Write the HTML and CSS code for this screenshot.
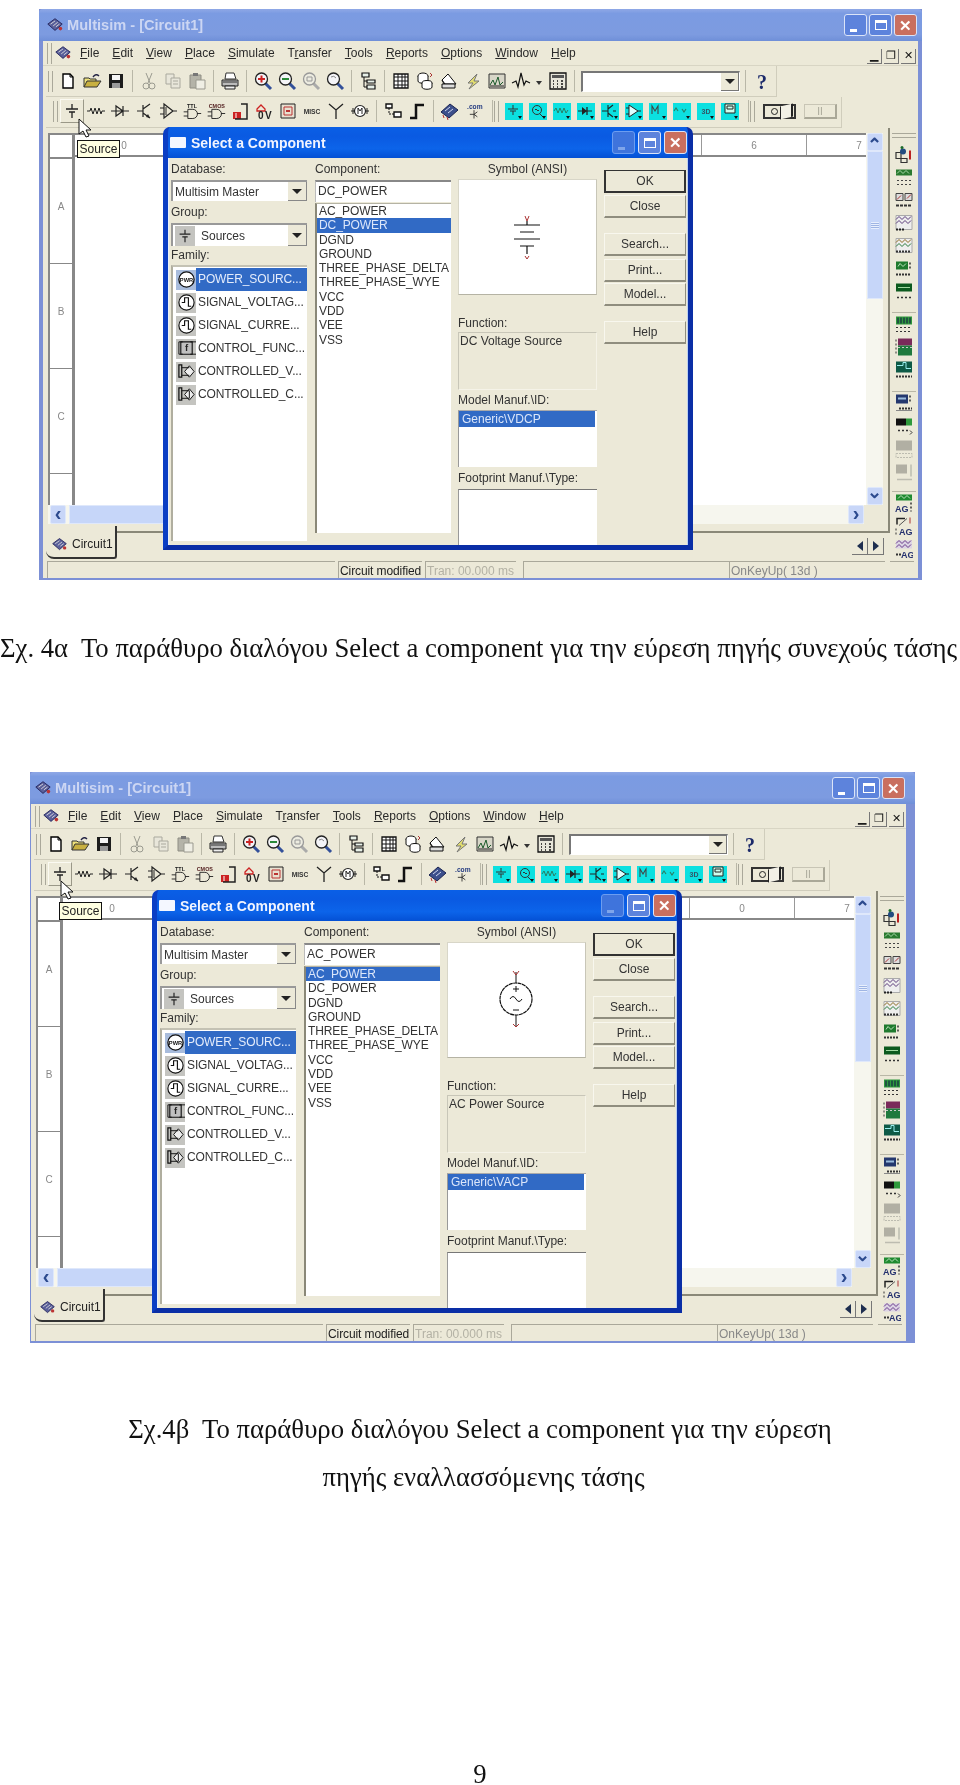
FILE: index.html
```html
<!DOCTYPE html>
<html lang="el">
<head>
<meta charset="utf-8">
<title>Select a Component</title>
<link rel="stylesheet" href="styles.css">
</head>
<body>
<svg class="defs" xmlns="http://www.w3.org/2000/svg">
<symbol id="i-app" viewBox="0 0 20 20"><path d="M2 9l8-6 8 6-8 7z" fill="#5a5f9a" stroke="#23245a"/><path d="M5 9l5-3.5M8 11l5-4M11 12l4-3" stroke="#ddd" fill="none"/><circle cx="16" cy="14" r="2" fill="#b33"/></symbol>
<symbol id="i-new" viewBox="0 0 20 20"><path d="M5 3h7l3 3v11H5z" fill="#fff" stroke="#000" stroke-width="1.4"/><path d="M12 3v3h3" fill="none" stroke="#000"/></symbol>
<symbol id="i-open" viewBox="0 0 20 20"><path d="M2 16V7h5l1 1h6v2" fill="#efe27c" stroke="#333"/><path d="M2 16l3-6h14l-4 6z" fill="#c8b040" stroke="#333"/><path d="M11 6q3-4 6-1" stroke="#224" stroke-width="1.4" fill="none"/></symbol>
<symbol id="i-save" viewBox="0 0 20 20"><path d="M3 3h14v14H3z" fill="#1d1d1d"/><path d="M6 4h8v5H6z" fill="#f4f4f4"/><path d="M6 12h8v5H6z" fill="#9a9a9a"/></symbol>
<symbol id="i-cut" viewBox="0 0 20 20"><g fill="none" stroke="#9b9b90"><path d="M7 2l4 10M13 2L9 12"/><circle cx="7" cy="15" r="3"/><circle cx="13" cy="15" r="3"/></g></symbol>
<symbol id="i-copy" viewBox="0 0 20 20"><g fill="#e8e6da" stroke="#aaa99e"><path d="M3 3h8v10H3z"/><path d="M8 7h9v10H8z"/></g><path d="M10 10h5M10 13h5" stroke="#aaa99e"/></symbol>
<symbol id="i-paste" viewBox="0 0 20 20"><path d="M3 4h11v13H3z" fill="#b4b3a8" stroke="#8f8e84"/><path d="M6 2h5v3H6z" fill="#777"/><path d="M9 9h9v9H9z" fill="#efeee4" stroke="#9a998f"/></symbol>
<symbol id="i-print" viewBox="0 0 20 20"><path d="M6 2h8l2 6H5z" fill="#fff" stroke="#333"/><path d="M2 9h16v6H2z" fill="#bbb" stroke="#222"/><path d="M5 15h10v3H5z" fill="#eee" stroke="#222"/><path d="M3 11h14" stroke="#333"/></symbol>
<symbol id="i-zin" viewBox="0 0 20 20"><path d="M12 12l6 6" stroke="#33509a" stroke-width="3"/><circle cx="8.500" cy="8" r="6" fill="#f4f4f8" stroke="#222" stroke-width="1.300"/><path d="M5 8h7M8.500 4.500v7" stroke="#c22" stroke-width="2"/></symbol>
<symbol id="i-zout" viewBox="0 0 20 20"><path d="M12 12l6 6" stroke="#33509a" stroke-width="3"/><circle cx="8.500" cy="8" r="6" fill="#f4f4f8" stroke="#222" stroke-width="1.300"/><path d="M5 8h7" stroke="#2a8a3a" stroke-width="2"/></symbol>
<symbol id="i-zar" viewBox="0 0 20 20"><path d="M12 12l6 6" stroke="#aaa" stroke-width="3"/><circle cx="8.500" cy="8" r="6" fill="#ecebe0" stroke="#999" stroke-width="1.300"/><path d="M6 6h5v4H6z" fill="none" stroke="#999"/></symbol>
<symbol id="i-zfit" viewBox="0 0 20 20"><path d="M12 12l6 6" stroke="#33509a" stroke-width="3"/><circle cx="8.500" cy="8" r="6" fill="#f4f4f8" stroke="#222" stroke-width="1.300"/><path d="M6 6q3-2 5 1" fill="none" stroke="#888"/></symbol>
<symbol id="i-tree" viewBox="0 0 20 20"><path d="M4 2h7v4H4zM9 9h8v3H9zM9 14h8v4H9z" fill="#e8f0e8" stroke="#111" stroke-width="1.200"/><path d="M6 6v10h3M6 10h3" fill="none" stroke="#111"/></symbol>
<symbol id="i-grid" viewBox="0 0 20 20"><path d="M3 3h14v14H3z" fill="#fff" stroke="#111" stroke-width="1.300"/><path d="M3 6h14M3 10h14M3 14h14M7 3v14M11 3v14M14 3v14" stroke="#111"/></symbol>
<symbol id="i-db" viewBox="0 0 20 20"><g fill="#fff" stroke="#111"><ellipse cx="8" cy="5" rx="5" ry="3"/><path d="M3 5v5c0 3 10 3 10 0V5"/><ellipse cx="12" cy="12" rx="5" ry="2.500"/><path d="M7 12v4c0 3 10 3 10 0v-4"/></g><path d="M15 2l2 2-2 2" fill="none" stroke="#a33"/></symbol>
<symbol id="i-post" viewBox="0 0 20 20"><path d="M3 9l6-6 8 10H5z" fill="#fff" stroke="#111"/><path d="M3 13h13v4H3zM3 9l3 4" fill="#ddd" stroke="#111"/></symbol>
<symbol id="i-bolt" viewBox="0 0 20 20"><path d="M14 3L5 12h5l-4 6 10-8h-5z" fill="#e3de70" stroke="#777"/></symbol>
<symbol id="i-grapher" viewBox="0 0 20 20"><path d="M2 3h16v14H2z" fill="#d8d6c8" stroke="#333"/><path d="M3 14l3-5 2 5 3-8 2 8 3-3" fill="none" stroke="#1a5a2a"/><path d="M3 15h14" stroke="#222"/></symbol>
<symbol id="i-wave" viewBox="0 0 20 20"><path d="M1 12l4-2 2 6 3-14 3 12 2-4 4 2" fill="none" stroke="#111" stroke-width="1.200"/></symbol>
<symbol id="i-calc" viewBox="0 0 20 20"><path d="M2 2h16v16H2z" fill="#e8e6da" stroke="#111" stroke-width="1.300"/><path d="M4 4h12v3H4z" fill="#555"/><path d="M5 10h1M9 10h1M13 10h2M5 13h1M9 13h1M13 13h2M5 16h1M9 16h1M13 16h2" stroke="#111" stroke-width="1.600"/></symbol>
<symbol id="i-help" viewBox="0 0 20 20"><text x="10" y="18" class="svg-help" text-anchor="middle">?</text></symbol>
<symbol id="i-src" viewBox="0 0 20 20"><path d="M10 3v5M4 8h12M7 11h6M10 11v6" stroke="#222" stroke-width="1.300" fill="none"/></symbol>
<symbol id="i-res" viewBox="0 0 20 20"><path d="M1 10h3l1-3 2 6 2-6 2 6 2-6 2 6 1-3h3" fill="none" stroke="#222"/></symbol>
<symbol id="i-dio" viewBox="0 0 20 20"><path d="M1 10h18M6 5v10l7-5zM13 5v10" fill="none" stroke="#222" stroke-width="1.200"/></symbol>
<symbol id="i-tra" viewBox="0 0 20 20"><path d="M3 10h6M9 4v12M9 8l7-5M9 12l7 5" fill="none" stroke="#222" stroke-width="1.200"/><path d="M14 13l2 4-4-1z" fill="#222"/></symbol>
<symbol id="i-amp" viewBox="0 0 20 20"><path d="M6 3v14l9-7zM2 7h4M2 13h4M15 10h4" fill="none" stroke="#222" stroke-width="1.200"/><path d="M8 6v8" stroke="#222"/></symbol>
<symbol id="i-ttl" viewBox="0 0 24 20"><text x="12" y="7" class="svg-tiny" text-anchor="middle">TTL</text><path d="M7 8h6a5 5 0 0 1 0 11H7zM2 11h5M2 16h5M18 13h5" fill="none" stroke="#222" stroke-width="1.100"/></symbol>
<symbol id="i-cmos" viewBox="0 0 24 20"><text x="13" y="7" class="svg-tiny svg-navy" text-anchor="middle">CMOS</text><path d="M7 8h6a5 5 0 0 1 0 11H7zM2 11h5M2 16h5M18 13h5" fill="none" stroke="#222" stroke-width="1.100"/></symbol>
<symbol id="i-mix" viewBox="0 0 20 20"><path d="M3 11h8v7H3z" fill="#c22"/><path d="M11 3h6v15H5" fill="none" stroke="#222" stroke-width="1.500"/><path d="M6 12v5" stroke="#fff"/></symbol>
<symbol id="i-ind" viewBox="0 0 20 20"><path d="M3 8l4-4 4 4v2H3z" fill="none" stroke="#c22" stroke-width="1.300"/><text x="4" y="18" class="svg-bold8">0</text><text x="11" y="18" class="svg-bold8">V</text></symbol>
<symbol id="i-pwr" viewBox="0 0 20 20"><path d="M3 3h14v14H3z" fill="#e8e0d0" stroke="#222"/><path d="M6 6h8v8H6z" fill="none" stroke="#b33"/><path d="M8 10h4" stroke="#b33" stroke-width="2"/></symbol>
<symbol id="i-misc" viewBox="0 0 24 20"><text x="12" y="14" class="svg-misc" text-anchor="middle">MISC</text></symbol>
<symbol id="i-ant" viewBox="0 0 20 20"><path d="M10 9v9M3 3l7 6 7-6" fill="none" stroke="#222" stroke-width="1.300"/></symbol>
<symbol id="i-mot" viewBox="0 0 20 20"><circle cx="10" cy="10" r="5.500" fill="#fff" stroke="#222" stroke-width="1.200"/><path d="M1 10h3M16 10h3M8 13V7l2 3 2-3v6" fill="none" stroke="#222"/><path d="M3 7v6M17 7v6" stroke="#222"/></symbol>
<symbol id="i-rou" viewBox="0 0 20 20"><path d="M3 3h6v4H3zM11 11h7v5h-7z" fill="#fff" stroke="#111" stroke-width="1.400"/><path d="M6 7v6h5" fill="none" stroke="#111" stroke-dasharray="2 1"/></symbol>
<symbol id="i-bus" viewBox="0 0 20 20"><path d="M3 17h6V4h8" fill="none" stroke="#111" stroke-width="2.500"/></symbol>
<symbol id="i-chip" viewBox="0 0 20 20"><path d="M1 11l9-8 8 6-9 8z" fill="#3c4f8c" stroke="#1a2350"/><path d="M5 10l5-4M8 12l5-4" stroke="#cfd6ee"/><path d="M3 14l1 3M7 16l1 3" stroke="#b33"/></symbol>
<symbol id="i-com" viewBox="0 0 24 20"><text x="13" y="8" class="svg-tiny svg-navy2" text-anchor="middle">.com</text><path d="M12 9v10M7 14h5M12 14l4-3M12 14l4 3" fill="none" stroke="#222"/></symbol>
<symbol id="c-src" viewBox="0 0 18 16"><path d="M8 2v4M3 6h10M5 8h6M8 8v4" stroke="#333" fill="none"/></symbol>
<symbol id="c-ac" viewBox="0 0 18 16"><circle cx="8" cy="7" r="4.500" fill="none" stroke="#333"/><path d="M6 7q1-2 2 0t2 0M11 11l3 3" fill="none" stroke="#333"/></symbol>
<symbol id="c-res" viewBox="0 0 18 16"><path d="M1 8l2-3 2 5 2-5 2 5 2-5 2 5 2-3" fill="none" stroke="#2b7d62"/></symbol>
<symbol id="c-dio" viewBox="0 0 18 16"><path d="M1 8h14" stroke="#222"/><path d="M5 4v8l5-4z" fill="#222"/><path d="M10 4v8" stroke="#222" stroke-width="1.300"/></symbol>
<symbol id="c-tra" viewBox="0 0 18 16"><path d="M1 8h6M7 2v12M7 6l5-4M7 10l5 4M12 8h3" fill="none" stroke="#222" stroke-width="1.100"/></symbol>
<symbol id="c-amp" viewBox="0 0 18 16"><path d="M4 2v12l9-6zM1 5h3M1 11h3M13 8h3" fill="#dff" stroke="#222"/></symbol>
<symbol id="c-m" viewBox="0 0 18 16"><path d="M3 11V3l3 5 3-5v8" fill="none" stroke="#444" stroke-width="1.100"/></symbol>
<symbol id="c-anl" viewBox="0 0 18 16"><path d="M1 8l2-3 2 3M9 6l2 3 2-3" fill="none" stroke="#2b7d62" stroke-width="1.100"/></symbol>
<symbol id="c-3d" viewBox="0 0 18 16"><text x="9" y="11" class="svg-3d" text-anchor="middle">3D</text></symbol>
<symbol id="c-box" viewBox="0 0 18 16"><path d="M4 1h10v9H4z" fill="#cfe" stroke="#222"/><path d="M6 3h6v3H6z" fill="none" stroke="#222"/></symbol>
<symbol id="s1" viewBox="0 0 18 20"><path d="M1 8h5v6H1zM6 14h6v4H6z" fill="none" stroke="#333" stroke-width="1.200"/><circle cx="8" cy="7" r="3" fill="#234c80"/><path d="M15 6v9" stroke="#b22" stroke-width="2"/><circle cx="7" cy="3" r="1.500" fill="#1a6a2a"/></symbol>
<symbol id="s2" viewBox="0 0 18 20"><path d="M1 2h16v6H1z" fill="#2a7a30"/><path d="M2 6l3-3 3 3 3-3 3 3" stroke="#a8d8a8" fill="none"/><path d="M2 13h14M2 17h14" stroke="#444" stroke-dasharray="2 2"/></symbol>
<symbol id="s3" viewBox="0 0 18 20"><path d="M1 3h7v7H1zM10 3h7v7h-7z" fill="#ddd" stroke="#444"/><path d="M2 9l4-4M12 8l4-4" stroke="#a33"/><path d="M1 15h16" stroke="#333" stroke-dasharray="3 1" stroke-width="2"/></symbol>
<symbol id="s4" viewBox="0 0 18 20"><path d="M1 2h16v14H1z" fill="#eee" stroke="#aaa"/><path d="M1 6l3-3 3 3 3-3 3 3 3-3M1 10l3-3 3 3 3-3 3 3 3-3" stroke="#5a3a7a" fill="none"/><path d="M1 16h9" stroke="#222" stroke-width="2" stroke-dasharray="2 1"/></symbol>
<symbol id="s5" viewBox="0 0 18 20"><path d="M1 2h16v14H1z" fill="#eee" stroke="#aaa"/><path d="M1 6l3-3 3 3 3-3 3 3 3-3" stroke="#8a6a20" fill="none"/><path d="M1 10l3-3 3 3 3-3 3 3 3-3" stroke="#267a3a" fill="none"/><path d="M1 15h15" stroke="#333" stroke-dasharray="2 1" stroke-width="2"/></symbol>
<symbol id="s6" viewBox="0 0 18 20"><path d="M1 2h12v8H1z" fill="#1f7a2e"/><path d="M3 7l2-3 3 3 3-3" stroke="#bde2bd" fill="none"/><path d="M15 3v2M15 7v2" stroke="#333" stroke-width="1.500"/><path d="M1 15h15" stroke="#333" stroke-dasharray="2 1" stroke-width="2"/></symbol>
<symbol id="s7" viewBox="0 0 18 20"><path d="M1 1h16v8H1z" fill="#0c5a1e"/><path d="M3 5h12" stroke="#9fd89f"/><path d="M2 15h14" stroke="#333" stroke-dasharray="2 2" stroke-width="1.500"/></symbol>
<symbol id="s8" viewBox="0 0 18 20"><path d="M1 2h16v8H1z" fill="#2f9a3c"/><path d="M3 3v6M6 3v6M9 3v6M12 3v6M15 3v6" stroke="#114" /><path d="M1 13h16M1 17h16" stroke="#333" stroke-dasharray="2 2"/></symbol>
<symbol id="s9" viewBox="0 0 18 20"><path d="M3 1h14v7H3z" fill="#7a2a5a"/><path d="M3 8h14v10H3z" fill="#1f7a3e"/><path d="M3 10h14" stroke="#ccc" stroke-dasharray="2 2"/><path d="M1 2v16" stroke="#333" stroke-dasharray="2 2"/></symbol>
<symbol id="s10" viewBox="0 0 18 20"><path d="M1 1h16v11H1z" fill="#0d5a46"/><path d="M2 5h6v-3h3v6h5" stroke="#9ee" fill="none"/><path d="M1 16h16" stroke="#333" stroke-dasharray="2 1" stroke-width="2"/></symbol>
<symbol id="s11" viewBox="0 0 18 20"><path d="M1 1h12v9H1z" fill="#24386e"/><path d="M3 5h8" stroke="#9bd" stroke-width="2"/><path d="M15 2v2M15 6v2" stroke="#333" stroke-width="1.500"/><path d="M4 15h13" stroke="#333" stroke-dasharray="2 1" stroke-width="2"/><path d="M1 17h16" stroke="#888"/></symbol>
<symbol id="s12" viewBox="0 0 18 20"><path d="M1 2h10v7H1z" fill="#111"/><path d="M11 2h6v7h-6z" fill="#2f9a3c"/><path d="M3 14h10" stroke="#333" stroke-dasharray="2 2" stroke-width="1.500"/><path d="M15 14l2 2-2 2" stroke="#333" fill="none"/></symbol>
<symbol id="s13" viewBox="0 0 18 20"><path d="M1 1h16v10H1z" fill="#b1afa3"/><path d="M1 14h16v4H1z" fill="none" stroke="#bdbcb0" stroke-dasharray="2 1"/></symbol>
<symbol id="s14" viewBox="0 0 18 20"><path d="M1 2h11v9H1z" fill="#b1afa3"/><path d="M16 2v12M2 17h15" stroke="#bdbcb0" stroke-width="1.500"/></symbol>
<symbol id="s15" viewBox="0 0 18 20"><path d="M1 1h16v6H1z" fill="#1f8a30"/><path d="M3 5l3-3 3 3 3-3 3 3" stroke="#bde2bd" fill="none"/><text x="0" y="18" class="svg-ag">AG</text><path d="M16 9v9" stroke="#333" stroke-dasharray="2 2" stroke-width="1.500"/></symbol>
<symbol id="s16" viewBox="0 0 18 20"><path d="M2 8V2h8" fill="none" stroke="#222" stroke-width="1.500"/><path d="M4 9l8-7" stroke="#555"/><path d="M15 1v6" stroke="#a33"/><text x="4" y="18" class="svg-ag">AG</text><path d="M1 12v6" stroke="#333" stroke-dasharray="2 2"/></symbol>
<symbol id="s17" viewBox="0 0 18 20"><path d="M1 1h16v8H1z" fill="#dcd4e4"/><path d="M1 4l3-3 3 3 3-3 3 3 3-3M1 8l3-3 3 3 3-3 3 3 3-3" stroke="#6a3a8a" fill="none"/><text x="6" y="18" class="svg-ag">AG</text><path d="M1 15h5" stroke="#333" stroke-width="2" stroke-dasharray="2 1"/></symbol>
<symbol id="f-pwr" viewBox="0 0 20 20"><circle cx="10" cy="10" r="8" fill="#fff" stroke="#111" stroke-width="1.400"/><text x="10" y="12.500" class="svg-pwr" text-anchor="middle">PWR</text></symbol>
<symbol id="f-sig" viewBox="0 0 20 20"><circle cx="10" cy="10" r="8" fill="#fff" stroke="#111" stroke-width="1.200"/><path d="M5 10h3V5h4v9h3" fill="none" stroke="#111" stroke-width="1.200"/></symbol>
<symbol id="f-fun" viewBox="0 0 20 20"><path d="M4 3h12v13H4z" fill="#c0c0c0" stroke="#111" stroke-width="1.200"/><path d="M2 3h4M2 16h4M14 3h6M14 16h6M2 3v13" stroke="#111" fill="none"/><text x="10" y="13" class="svg-bold8" text-anchor="middle">f</text></symbol>
<symbol id="f-ctl" viewBox="0 0 20 20"><path d="M2 3h3v13H2z" fill="none" stroke="#111" stroke-width="1.300"/><path d="M13 4l5 6-5 6-5-6z" fill="#eee" stroke="#111"/><path d="M5 6h8M5 14h8" stroke="#111"/></symbol>
<symbol id="f-cti" viewBox="0 0 20 20"><path d="M2 3h3v13H2z" fill="none" stroke="#111" stroke-width="1.300"/><path d="M13 4l5 6-5 6-5-6z" fill="#eee" stroke="#111"/><path d="M5 6h8M5 14h8M13 6v8" stroke="#111"/></symbol>
<symbol id="sym-dc" viewBox="0 0 40 60"><g fill="none" stroke="#111" stroke-width="1.200"><path d="M20 13v4M7 17h26M13 24h14M7 31h26M13 38h14M20 38v8"/></g><path d="M18 8l2 5 2-5M18 48l2 3 2-3" fill="none" stroke="#a33"/></symbol>
<symbol id="sym-ac" viewBox="0 0 40 60"><path d="M20 3v11M20 46v11" stroke="#111" fill="none"/><circle cx="20" cy="30" r="16" fill="#fff" stroke="#111" stroke-width="1.200" stroke-dasharray="4 .5"/><path d="M14 30q3-5 6 0t6 0M20 17v6M17 20h6M17 41h6" fill="none" stroke="#111"/><path d="M17 2l3 4 3-4M17 55l3 3 3-3" fill="none" stroke="#a33"/></symbol>
</svg>

<section class="win win-a">
  <header class="titlebar"><svg class="app-ic"><use href="#i-app"/></svg><span class="title-text">Multisim - [Circuit1]</span>
    <div class="caps"><span class="cap cap-min"><i class="glyph-min"></i></span><span class="cap cap-max"><i class="glyph-max"></i></span><span class="cap cap-close">✕</span></div></header>
  <div class="win-body">
    <nav class="menubar"><i class="grip"></i><svg class="menu-ic"><use href="#i-app"/></svg>
      <span class="m"><u>F</u>ile</span><span class="m"><u>E</u>dit</span><span class="m"><u>V</u>iew</span><span class="m"><u>P</u>lace</span><span class="m"><u>S</u>imulate</span><span class="m">T<u>r</u>ansfer</span><span class="m"><u>T</u>ools</span><span class="m"><u>R</u>eports</span><span class="m"><u>O</u>ptions</span><span class="m"><u>W</u>indow</span><span class="m"><u>H</u>elp</span>
      <div class="mdi"><span class="mdi-b">▁</span><span class="mdi-b">❐</span><span class="mdi-b">✕</span></div></nav>
    <div class="toolbar tb-1"><i class="grip"></i>
      <b class="t"><svg><use href="#i-new"/></svg></b><b class="t"><svg><use href="#i-open"/></svg></b><b class="t"><svg><use href="#i-save"/></svg></b><i class="sep"></i>
      <b class="t"><svg><use href="#i-cut"/></svg></b><b class="t"><svg><use href="#i-copy"/></svg></b><b class="t"><svg><use href="#i-paste"/></svg></b><i class="sep"></i>
      <b class="t"><svg><use href="#i-print"/></svg></b><i class="sep"></i>
      <b class="t"><svg><use href="#i-zin"/></svg></b><b class="t"><svg><use href="#i-zout"/></svg></b><b class="t"><svg><use href="#i-zar"/></svg></b><b class="t"><svg><use href="#i-zfit"/></svg></b><i class="sep"></i>
      <b class="t"><svg><use href="#i-tree"/></svg></b><i class="sep"></i>
      <b class="t"><svg><use href="#i-grid"/></svg></b><b class="t"><svg><use href="#i-db"/></svg></b><b class="t"><svg><use href="#i-post"/></svg></b><b class="t"><svg><use href="#i-bolt"/></svg></b><b class="t"><svg><use href="#i-grapher"/></svg></b><b class="t"><svg><use href="#i-wave"/></svg></b><i class="caret-cell"></i><b class="t"><svg><use href="#i-calc"/></svg></b><i class="sep"></i>
      <div class="tb-combo"><span class="tb-combo-btn"><i class="tri"></i></span></div><i class="sep"></i>
      <b class="t"><svg><use href="#i-help"/></svg></b></div>
    <div class="toolbar tb-2"><i class="grip"></i>
      <b class="t t-press"><svg><use href="#i-src"/></svg></b><b class="t"><svg><use href="#i-res"/></svg></b><b class="t"><svg><use href="#i-dio"/></svg></b><b class="t"><svg><use href="#i-tra"/></svg></b><b class="t"><svg><use href="#i-amp"/></svg></b><b class="t"><svg><use href="#i-ttl"/></svg></b><b class="t"><svg><use href="#i-cmos"/></svg></b><b class="t"><svg><use href="#i-mix"/></svg></b><b class="t"><svg><use href="#i-ind"/></svg></b><b class="t"><svg><use href="#i-pwr"/></svg></b><b class="t"><svg><use href="#i-misc"/></svg></b><b class="t"><svg><use href="#i-ant"/></svg></b><b class="t"><svg><use href="#i-mot"/></svg></b><i class="sep"></i>
      <b class="t"><svg><use href="#i-rou"/></svg></b><b class="t"><svg><use href="#i-bus"/></svg></b><i class="sep"></i>
      <b class="t"><svg><use href="#i-chip"/></svg></b><b class="t"><svg><use href="#i-com"/></svg></b><i class="sep-s"></i><i class="grip grip-2"></i>
      <b class="cy"><svg><use href="#c-src"/></svg></b><b class="cy"><svg><use href="#c-ac"/></svg></b><b class="cy"><svg><use href="#c-res"/></svg></b><b class="cy"><svg><use href="#c-dio"/></svg></b><b class="cy"><svg><use href="#c-tra"/></svg></b><b class="cy"><svg><use href="#c-amp"/></svg></b><b class="cy"><svg><use href="#c-m"/></svg></b><b class="cy"><svg><use href="#c-anl"/></svg></b><b class="cy"><svg><use href="#c-3d"/></svg></b><b class="cy"><svg><use href="#c-box"/></svg></b><i class="sep-s"></i><i class="grip grip-2"></i>
      <span class="sim-sw"><i class="sw-dot"></i><i class="sw-flag"></i></span><span class="sim-pause">II</span></div>
    <div class="mid">
      <div class="mid-main">
        <div class="client">
          <div class="client-top">
            <div class="rows"><span class="r-corner"></span><span class="r-cell">A</span><span class="r-cell">B</span><span class="r-cell">C</span></div>
            <div class="sheet"><div class="ruler"><span>0</span><span></span><span></span><span></span><span></span><span></span><span>6</span><span>7</span></div></div>
            <div class="vscroll"><span class="sb-btn">⌃</span><span class="vthumb"><i></i></span><span class="vtrack"></span><span class="sb-btn sb-down">⌄</span></div>
          </div>
          <div class="hscroll"><span class="sb-btn sb-h">‹</span><span class="hthumb"></span><span class="htrack"></span><span class="sb-btn sb-h">›</span></div>
        </div>
        <div class="tabrow"><span class="tab"><svg class="tab-ic"><use href="#i-app"/></svg>Circuit1</span><div class="navs"><span class="nav"><i class="tri-l"></i></span><span class="nav"><i class="tri-r"></i></span></div></div>
      </div>
      <aside class="side">
        <i class="side-grip"></i>
        <svg class="s"><use href="#s1"/></svg><svg class="s"><use href="#s2"/></svg><svg class="s"><use href="#s3"/></svg><svg class="s"><use href="#s4"/></svg><svg class="s"><use href="#s5"/></svg><svg class="s"><use href="#s6"/></svg><svg class="s"><use href="#s7"/></svg><i class="side-sep"></i>
        <svg class="s"><use href="#s8"/></svg><svg class="s"><use href="#s9"/></svg><svg class="s"><use href="#s10"/></svg><i class="side-sep side-sep-l"></i>
        <svg class="s"><use href="#s11"/></svg><svg class="s"><use href="#s12"/></svg><svg class="s"><use href="#s13"/></svg><svg class="s"><use href="#s14"/></svg><i class="side-sep side-sep-m"></i>
        <svg class="s"><use href="#s15"/></svg><svg class="s"><use href="#s16"/></svg><svg class="s"><use href="#s17"/></svg>
      </aside>
    </div>
    <footer class="status"><span class="st st-1"></span><span class="st st-2">Circuit modified</span><span class="st st-3">Tran: 00.000 ms</span><span class="st st-4"></span><span class="st st-5">OnKeyUp( 13d )</span><span class="st st-6"></span></footer>
  </div>
  <svg class="cursor" viewBox="0 0 14 20"><path d="M1 1v15l4-3 3 6 3-1-3-6h5z" fill="#fff" stroke="#111"/></svg>
  <span class="tip">Source</span>
  <div class="dlg">
    <header class="dlg-title"><i class="dlg-ic"></i><span class="dlg-text">Select a Component</span>
      <div class="caps dlg-caps"><span class="cap cap-min cap-dim"><i class="glyph-min"></i></span><span class="cap cap-max"><i class="glyph-max"></i></span><span class="cap cap-close">✕</span></div></header>
    <div class="dlg-body">
      <div class="col">
        <label class="lb">Database:</label>
        <div class="combo c1"><span>Multisim Master</span><span class="combo-btn"><i class="tri"></i></span></div>
        <label class="lb lb-g">Group:</label>
        <div class="combo c2"><span class="grp-ic"><svg><use href="#i-src"/></svg></span><span>Sources</span><span class="combo-btn"><i class="tri"></i></span></div>
        <label class="lb lb-f">Family:</label>
        <ul class="fam">
          <li class="sel"><span class="fi fi-sel"><svg><use href="#f-pwr"/></svg></span><span class="ft">POWER_SOURC...</span></li>
          <li><span class="fi"><svg><use href="#f-sig"/></svg></span><span class="ft">SIGNAL_VOLTAG...</span></li>
          <li><span class="fi"><svg><use href="#f-sig"/></svg></span><span class="ft">SIGNAL_CURRE...</span></li>
          <li><span class="fi"><svg><use href="#f-fun"/></svg></span><span class="ft">CONTROL_FUNC...</span></li>
          <li><span class="fi"><svg><use href="#f-ctl"/></svg></span><span class="ft">CONTROLLED_V...</span></li>
          <li><span class="fi"><svg><use href="#f-cti"/></svg></span><span class="ft">CONTROLLED_C...</span></li>
        </ul>
      </div>
      <div class="col">
        <label class="lb">Component:</label>
        <div class="inp">DC_POWER</div>
        <ul class="comp">
          <li>AC_POWER</li><li class="sel">DC_POWER</li><li>DGND</li><li>GROUND</li><li>THREE_PHASE_DELTA</li><li>THREE_PHASE_WYE</li><li>VCC</li><li>VDD</li><li>VEE</li><li>VSS</li>
        </ul>
      </div>
      <div class="col">
        <label class="lb lb-c">Symbol (ANSI)</label>
        <div class="sym"><svg class="sym-dc"><use href="#sym-dc"/></svg></div>
        <label class="lb lb-fn">Function:</label>
        <div class="fn">DC Voltage Source</div>
        <label class="lb lb-m">Model Manuf.\ID:</label>
        <div class="mdl"><span class="mdl-sel">Generic\VDCP</span></div>
        <label class="lb lb-fp">Footprint Manuf.\Type:</label>
        <div class="fp"></div>
      </div>
      <div class="col btns">
        <button class="btn btn-def">OK</button><button class="btn btn-2">Close</button><button class="btn btn-3">Search...</button><button class="btn btn-4">Print...</button><button class="btn btn-5">Model...</button><button class="btn btn-3">Help</button>
      </div>
    </div>
  </div>
</section>

<p class="cap1">Σχ. 4α&nbsp; Το παράθυρο διαλόγου Select a component για την εύρεση πηγής συνεχούς τάσης</p>

<section class="win win-b">
  <header class="titlebar"><svg class="app-ic"><use href="#i-app"/></svg><span class="title-text">Multisim - [Circuit1]</span>
    <div class="caps"><span class="cap cap-min"><i class="glyph-min"></i></span><span class="cap cap-max"><i class="glyph-max"></i></span><span class="cap cap-close">✕</span></div></header>
  <div class="win-body">
    <nav class="menubar"><i class="grip"></i><svg class="menu-ic"><use href="#i-app"/></svg>
      <span class="m"><u>F</u>ile</span><span class="m"><u>E</u>dit</span><span class="m"><u>V</u>iew</span><span class="m"><u>P</u>lace</span><span class="m"><u>S</u>imulate</span><span class="m">T<u>r</u>ansfer</span><span class="m"><u>T</u>ools</span><span class="m"><u>R</u>eports</span><span class="m"><u>O</u>ptions</span><span class="m"><u>W</u>indow</span><span class="m"><u>H</u>elp</span>
      <div class="mdi"><span class="mdi-b">▁</span><span class="mdi-b">❐</span><span class="mdi-b">✕</span></div></nav>
    <div class="toolbar tb-1"><i class="grip"></i>
      <b class="t"><svg><use href="#i-new"/></svg></b><b class="t"><svg><use href="#i-open"/></svg></b><b class="t"><svg><use href="#i-save"/></svg></b><i class="sep"></i>
      <b class="t"><svg><use href="#i-cut"/></svg></b><b class="t"><svg><use href="#i-copy"/></svg></b><b class="t"><svg><use href="#i-paste"/></svg></b><i class="sep"></i>
      <b class="t"><svg><use href="#i-print"/></svg></b><i class="sep"></i>
      <b class="t"><svg><use href="#i-zin"/></svg></b><b class="t"><svg><use href="#i-zout"/></svg></b><b class="t"><svg><use href="#i-zar"/></svg></b><b class="t"><svg><use href="#i-zfit"/></svg></b><i class="sep"></i>
      <b class="t"><svg><use href="#i-tree"/></svg></b><i class="sep"></i>
      <b class="t"><svg><use href="#i-grid"/></svg></b><b class="t"><svg><use href="#i-db"/></svg></b><b class="t"><svg><use href="#i-post"/></svg></b><b class="t"><svg><use href="#i-bolt"/></svg></b><b class="t"><svg><use href="#i-grapher"/></svg></b><b class="t"><svg><use href="#i-wave"/></svg></b><i class="caret-cell"></i><b class="t"><svg><use href="#i-calc"/></svg></b><i class="sep"></i>
      <div class="tb-combo"><span class="tb-combo-btn"><i class="tri"></i></span></div><i class="sep"></i>
      <b class="t"><svg><use href="#i-help"/></svg></b></div>
    <div class="toolbar tb-2"><i class="grip"></i>
      <b class="t t-press"><svg><use href="#i-src"/></svg></b><b class="t"><svg><use href="#i-res"/></svg></b><b class="t"><svg><use href="#i-dio"/></svg></b><b class="t"><svg><use href="#i-tra"/></svg></b><b class="t"><svg><use href="#i-amp"/></svg></b><b class="t"><svg><use href="#i-ttl"/></svg></b><b class="t"><svg><use href="#i-cmos"/></svg></b><b class="t"><svg><use href="#i-mix"/></svg></b><b class="t"><svg><use href="#i-ind"/></svg></b><b class="t"><svg><use href="#i-pwr"/></svg></b><b class="t"><svg><use href="#i-misc"/></svg></b><b class="t"><svg><use href="#i-ant"/></svg></b><b class="t"><svg><use href="#i-mot"/></svg></b><i class="sep"></i>
      <b class="t"><svg><use href="#i-rou"/></svg></b><b class="t"><svg><use href="#i-bus"/></svg></b><i class="sep"></i>
      <b class="t"><svg><use href="#i-chip"/></svg></b><b class="t"><svg><use href="#i-com"/></svg></b><i class="sep-s"></i><i class="grip grip-2"></i>
      <b class="cy"><svg><use href="#c-src"/></svg></b><b class="cy"><svg><use href="#c-ac"/></svg></b><b class="cy"><svg><use href="#c-res"/></svg></b><b class="cy"><svg><use href="#c-dio"/></svg></b><b class="cy"><svg><use href="#c-tra"/></svg></b><b class="cy"><svg><use href="#c-amp"/></svg></b><b class="cy"><svg><use href="#c-m"/></svg></b><b class="cy"><svg><use href="#c-anl"/></svg></b><b class="cy"><svg><use href="#c-3d"/></svg></b><b class="cy"><svg><use href="#c-box"/></svg></b><i class="sep-s"></i><i class="grip grip-2"></i>
      <span class="sim-sw"><i class="sw-dot"></i><i class="sw-flag"></i></span><span class="sim-pause">II</span></div>
    <div class="mid">
      <div class="mid-main">
        <div class="client">
          <div class="client-top">
            <div class="rows"><span class="r-corner"></span><span class="r-cell">A</span><span class="r-cell">B</span><span class="r-cell">C</span></div>
            <div class="sheet"><div class="ruler"><span>0</span><span></span><span></span><span></span><span></span><span></span><span>0</span><span>7</span></div></div>
            <div class="vscroll"><span class="sb-btn">⌃</span><span class="vthumb"><i></i></span><span class="vtrack"></span><span class="sb-btn sb-down">⌄</span></div>
          </div>
          <div class="hscroll"><span class="sb-btn sb-h">‹</span><span class="hthumb"></span><span class="htrack"></span><span class="sb-btn sb-h">›</span></div>
        </div>
        <div class="tabrow"><span class="tab"><svg class="tab-ic"><use href="#i-app"/></svg>Circuit1</span><div class="navs"><span class="nav"><i class="tri-l"></i></span><span class="nav"><i class="tri-r"></i></span></div></div>
      </div>
      <aside class="side">
        <i class="side-grip"></i>
        <svg class="s"><use href="#s1"/></svg><svg class="s"><use href="#s2"/></svg><svg class="s"><use href="#s3"/></svg><svg class="s"><use href="#s4"/></svg><svg class="s"><use href="#s5"/></svg><svg class="s"><use href="#s6"/></svg><svg class="s"><use href="#s7"/></svg><i class="side-sep"></i>
        <svg class="s"><use href="#s8"/></svg><svg class="s"><use href="#s9"/></svg><svg class="s"><use href="#s10"/></svg><i class="side-sep side-sep-l"></i>
        <svg class="s"><use href="#s11"/></svg><svg class="s"><use href="#s12"/></svg><svg class="s"><use href="#s13"/></svg><svg class="s"><use href="#s14"/></svg><i class="side-sep side-sep-m"></i>
        <svg class="s"><use href="#s15"/></svg><svg class="s"><use href="#s16"/></svg><svg class="s"><use href="#s17"/></svg>
      </aside>
    </div>
    <footer class="status"><span class="st st-1"></span><span class="st st-2">Circuit modified</span><span class="st st-3">Tran: 00.000 ms</span><span class="st st-4"></span><span class="st st-5">OnKeyUp( 13d )</span><span class="st st-6"></span></footer>
  </div>
  <svg class="cursor" viewBox="0 0 14 20"><path d="M1 1v15l4-3 3 6 3-1-3-6h5z" fill="#fff" stroke="#111"/></svg>
  <span class="tip">Source</span>
  <div class="dlg">
    <header class="dlg-title"><i class="dlg-ic"></i><span class="dlg-text">Select a Component</span>
      <div class="caps dlg-caps"><span class="cap cap-min cap-dim"><i class="glyph-min"></i></span><span class="cap cap-max"><i class="glyph-max"></i></span><span class="cap cap-close">✕</span></div></header>
    <div class="dlg-body">
      <div class="col">
        <label class="lb">Database:</label>
        <div class="combo c1"><span>Multisim Master</span><span class="combo-btn"><i class="tri"></i></span></div>
        <label class="lb lb-g">Group:</label>
        <div class="combo c2"><span class="grp-ic"><svg><use href="#i-src"/></svg></span><span>Sources</span><span class="combo-btn"><i class="tri"></i></span></div>
        <label class="lb lb-f">Family:</label>
        <ul class="fam">
          <li class="sel"><span class="fi fi-sel"><svg><use href="#f-pwr"/></svg></span><span class="ft">POWER_SOURC...</span></li>
          <li><span class="fi"><svg><use href="#f-sig"/></svg></span><span class="ft">SIGNAL_VOLTAG...</span></li>
          <li><span class="fi"><svg><use href="#f-sig"/></svg></span><span class="ft">SIGNAL_CURRE...</span></li>
          <li><span class="fi"><svg><use href="#f-fun"/></svg></span><span class="ft">CONTROL_FUNC...</span></li>
          <li><span class="fi"><svg><use href="#f-ctl"/></svg></span><span class="ft">CONTROLLED_V...</span></li>
          <li><span class="fi"><svg><use href="#f-cti"/></svg></span><span class="ft">CONTROLLED_C...</span></li>
        </ul>
      </div>
      <div class="col">
        <label class="lb">Component:</label>
        <div class="inp">AC_POWER</div>
        <ul class="comp">
          <li class="sel">AC_POWER</li><li>DC_POWER</li><li>DGND</li><li>GROUND</li><li>THREE_PHASE_DELTA</li><li>THREE_PHASE_WYE</li><li>VCC</li><li>VDD</li><li>VEE</li><li>VSS</li>
        </ul>
      </div>
      <div class="col">
        <label class="lb lb-c">Symbol (ANSI)</label>
        <div class="sym"><svg class="sym-ac"><use href="#sym-ac"/></svg></div>
        <label class="lb lb-fn">Function:</label>
        <div class="fn">AC Power Source</div>
        <label class="lb lb-m">Model Manuf.\ID:</label>
        <div class="mdl"><span class="mdl-sel">Generic\VACP</span></div>
        <label class="lb lb-fp">Footprint Manuf.\Type:</label>
        <div class="fp"></div>
      </div>
      <div class="col btns">
        <button class="btn btn-def">OK</button><button class="btn btn-2">Close</button><button class="btn btn-3">Search...</button><button class="btn btn-4">Print...</button><button class="btn btn-5">Model...</button><button class="btn btn-3">Help</button>
      </div>
    </div>
  </div>
</section>

<p class="cap2">Σχ.4β&nbsp; Το παράθυρο διαλόγου Select a component για την εύρεση<span class="cap2-l2">πηγής εναλλασσόμενης τάσης</span></p>
<p class="pageno">9</p>
</body>
</html>
```
FILE: styles.css
```css
html, body { margin: 0; padding: 0; background: #fff; }
body { width: 960px; font-family: "Liberation Serif", "Times New Roman", serif; color: #111; overflow-x: hidden; }
.defs { display: none; }
.svg-help { font: bold 20px "Liberation Serif", serif; fill: #1c2a6a; }
.svg-tiny { font: bold 6.500px "Liberation Sans", sans-serif; fill: #222; }
.svg-navy { fill: #522; }
.svg-navy2 { fill: #233a80; font-size: 8px; }
.svg-bold8 { font: bold 10px "Liberation Sans", sans-serif; fill: #222; }
.svg-misc { font: bold 8px "Liberation Sans", sans-serif; fill: #333; }
.svg-3d { font: bold 7px "Liberation Sans", sans-serif; fill: #356; }
.svg-ag { font: bold 9px "Liberation Sans", sans-serif; fill: #24306e; }
.svg-pwr { font: bold 6px "Liberation Sans", sans-serif; fill: #111; }

/* Application window */
.win { --l: 4px; --r: 4px; position: relative; display: flex; flex-direction: column; box-sizing: border-box; height: 571px; background: #7c90d6; font-family: "Liberation Sans", Arial, sans-serif; font-size: 12px; color: #222; filter: blur(.4px); }
.win-a { width: 883px; margin: 9px 0 0 39px; }
.win-b { --l: 1px; --r: 9px; width: 885px; margin: 0 0 0 30px; }
.titlebar { display: flex; align-items: center; height: 32px; flex: none; box-sizing: border-box; padding: 0 calc(var(--r) + 1px) 0 calc(var(--l) + 3px); background: linear-gradient(#8fa8e6, #7b9be2 14%, #7d9be0 80%, #6f8fd8); border-radius: 4px 4px 0 0; }
.app-ic { width: 18px; height: 18px; margin-right: 3px; }
.title-text { font-size: 14.600px; font-weight: bold; color: #ccd6f3; }
.caps { margin-left: auto; display: flex; gap: 2px; }
.cap { display: flex; align-items: center; justify-content: center; width: 23px; height: 22px; box-sizing: border-box; border: 1px solid #dbe4f8; border-radius: 3px; background: #5d83dc; color: #fff; font-size: 15px; line-height: 1; }
.cap-close { background: #c96f5f; font-weight: bold; }
.glyph-min { align-self: flex-end; width: 7px; height: 3px; margin: 0 5px 3px 0; background: #fff; }
.glyph-max { width: 12px; height: 10px; border: 1px solid #fff; border-top-width: 3px; box-sizing: border-box; }
.cap-dim { background: #3f74dc; border-color: #6c9df0; }
.cap-dim .glyph-min { background: #7fa5ea; }
.win-body { display: flex; flex-direction: column; flex: 1; margin: 0 var(--r) 2px var(--l); background: #ece9d8; min-height: 0; }

.menubar { display: flex; align-items: center; gap: 13px; height: 25px; flex: none; box-sizing: border-box; padding: 0 2px 0 4px; border-bottom: 1px solid #d8d5c4; }
.grip { flex: none; width: 3px; height: 21px; border-left: 1px solid #aaa89a; border-right: 1px solid #aaa89a; }
.menubar .grip { margin-right: -11px; }
.menu-ic { width: 18px; height: 18px; margin-right: -5px; }
.m { font-size: 12px; color: #2a2a2a; }
.mdi { margin-left: auto; display: flex; gap: 2px; margin-top: 6px; }
.mdi-b { display: flex; align-items: center; justify-content: center; width: 14px; height: 14px; border-right: 1px solid #777; border-bottom: 1px solid #777; font-size: 11px; color: #111; }

.toolbar { display: flex; align-items: center; flex: none; height: 31px; box-sizing: border-box; margin-left: 3px; padding-left: 2px; border-bottom: 1px solid #d0cdbc; border-right: 1px solid #d0cdbc; }
.tb-1 { width: 731px; }
.tb-2 { width: 796px; padding-bottom: 2px; }
.tb-2 > .grip:first-child { margin-left: 5px; margin-right: 2px; }
.tb-1 > .grip:first-child { margin-right: 3px; }
.t { display: flex; align-items: center; justify-content: center; flex: none; width: 24px; height: 24px; box-sizing: border-box; }
.t svg { width: 20px; height: 20px; }
.t-press { border: 1px solid; border-color: #fbfaf2 #9a9888 #9a9888 #fbfaf2; }
.sep { flex: none; width: 9px; height: 22px; box-sizing: border-box; border-left: 1px solid #b9b7a7; margin-left: 4px; margin-right: -4px; }
.sep-s { flex: none; width: 1px; height: 22px; background: #b9b7a7; margin-left: 6px; }
.grip-2 { margin: 0 3px 0 1px; }
.caret-cell { flex: none; width: 13px; height: 0; }
.caret-cell::after { content: ""; display: block; width: 0; height: 0; margin-left: 3px; border: 3px solid transparent; border-top: 4px solid #333; border-bottom: 0; }
.tb-combo { display: flex; justify-content: flex-end; flex: none; width: 159px; height: 21px; margin: 0 1px 0 2px; box-sizing: border-box; background: #fff; border: 1px solid #fff; border-top: 2px solid #777; border-left: 2px solid #777; }
.tb-combo-btn { display: flex; align-items: center; justify-content: center; width: 17px; background: #ece9d8; border-right: 1px solid #777; border-bottom: 1px solid #777; }
.tri { width: 0; height: 0; border: 5px solid transparent; border-top: 5px solid #222; border-bottom: 0; }
.cy { position: relative; display: flex; align-items: center; justify-content: center; flex: none; width: 18px; height: 17px; margin: 0 3px; background: #0ce0e0; }
.cy svg { width: 18px; height: 16px; }
.cy::after { content: ""; position: absolute; right: 1px; bottom: 1px; border: 2.500px solid transparent; border-top: 3px solid #111; border-bottom: 0; }
.sim-sw { display: flex; align-items: center; justify-content: space-between; flex: none; width: 33px; height: 15px; box-sizing: border-box; margin-left: 5px; padding: 0 1px 0 6px; background: #ece9d8; border: 2px solid #333; }
.sw-dot { width: 5px; height: 5px; border: 1px solid #222; border-radius: 50%; }
.sw-flag { width: 13px; height: 13px; border-left: 1px solid #222; border-right: 2px solid #222; box-sizing: border-box; transform: skewY(-14deg); background: #f2f0e6; }
.sim-pause { flex: none; width: 33px; height: 15px; margin-left: 8px; box-sizing: border-box; border: 1px solid #c8c5b5; border-right: 2px solid #aaa898; border-bottom: 2px solid #aaa898; color: #a8a698; font-size: 10px; text-align: center; line-height: 13px; }

.mid { display: flex; flex: none; height: 433px; }
.mid-main { display: flex; flex-direction: column; width: 847px; flex: none; }
.client { display: flex; flex-direction: column; box-sizing: border-box; height: 405px; flex: none; margin-left: 5px; padding: 5px 5px 0 0; border-right: 2px solid #8a8878; border-bottom: 2px solid #8a8878; }
.client-top { display: flex; flex: none; height: 372px; }
.rows { display: flex; flex-direction: column; flex: none; width: 27px; box-sizing: border-box; background: #fff; border-left: 2px solid #888; border-right: 3px solid #888; border-top: 2px solid #888; color: #888; font-size: 10px; overflow: hidden; }
.r-corner { flex: none; height: 22px; border-bottom: 2px solid #888; }
.r-cell { display: flex; align-items: center; justify-content: center; flex: none; box-sizing: border-box; height: 105px; padding-bottom: 10px; border-bottom: 1px solid #888; }
.sheet { flex: 1; min-width: 0; overflow: hidden; background: #fff; }
.ruler { display: flex; box-sizing: border-box; height: 24px; margin-left: -3px; border-top: 2px solid #888; border-bottom: 2px solid #888; color: #888; font-size: 10px; }
.ruler span { flex: none; width: 104px; display: flex; align-items: center; justify-content: center; border-right: 1px solid #999; }
.vscroll { display: flex; flex-direction: column; align-items: center; flex: none; width: 17px; background: #f6f6ee; }
.sb-btn { display: flex; justify-content: center; flex: none; box-sizing: border-box; width: 16px; height: 18px; border-radius: 2px; background: #c8d6f8; border: 1px solid #dfe8fb; color: #2c4a8e; font-size: 18px; font-weight: bold; line-height: 22px; }
.sb-down { line-height: 8px; }
.vthumb { display: flex; align-items: center; justify-content: center; flex: none; box-sizing: border-box; width: 16px; height: 148px; background: #c6d6f9; border: 1px solid #dfe8fb; }
.vthumb i { width: 8px; height: 7px; background: repeating-linear-gradient(#e8effd 0 1px, #9fb5e4 1px 2px); }
.vtrack { flex: 1; }
.hscroll { display: flex; gap: 3px; flex: none; height: 19px; padding-left: 2px; box-sizing: border-box; width: 816px; background: #f6f6ee; }
.sb-h { width: 16px; height: 19px; font-size: 20px; line-height: 15px; }
.hthumb { flex: none; width: 120px; background: #c6d6f9; border: 1px solid #dfe8fb; box-sizing: border-box; }
.htrack { flex: 1; }
.tabrow { display: flex; align-items: flex-start; flex: 1; padding-left: 3px; }
.tab { position: relative; display: flex; align-items: center; gap: 4px; box-sizing: border-box; width: 71px; height: 33px; margin-top: -7px; padding: 5px 0 0 5px; background: #ece9d8; border-right: 2px solid #333; border-bottom: 2px solid #333; border-radius: 0 0 3px 8px; font-size: 12px; }
.tab-ic { width: 17px; height: 17px; }
.navs { margin-left: auto; display: flex; margin-top: 5px; margin-right: 6px; }
.nav { display: flex; align-items: center; justify-content: center; width: 16px; height: 17px; box-sizing: border-box; border-right: 1px solid #777; border-bottom: 1px solid #777; }
.tri-l { border: 5px solid transparent; border-right: 6px solid #1f2f50; border-left: 0; }
.tri-r { border: 5px solid transparent; border-left: 6px solid #1f2f50; border-right: 0; }

.side { display: flex; flex-direction: column; align-items: center; flex: none; width: 28px; box-sizing: border-box; }
.side-grip { flex: none; width: 24px; height: 3px; margin: 5px 0 5px; border-top: 1px solid #aaa89a; border-bottom: 1px solid #aaa89a; }
.s { flex: none; width: 18px; height: 20px; padding: 1.500px 0; }
.side-sep { flex: none; width: 24px; height: 9px; box-sizing: border-box; border-bottom: 1px solid #b9b7a7; padding-bottom: 4px; }
.side-sep-l { height: 10px; }
.side-sep-m { height: 8px; }

.status { display: flex; flex: none; height: 17px; padding-left: 4px; gap: 3px; box-sizing: border-box; }
.st { display: block; flex: none; box-sizing: border-box; height: 17px; border-top: 1px solid #aaa89a; border-left: 1px solid #aaa89a; font-size: 12px; line-height: 18px; padding-left: 1px; white-space: nowrap; overflow: hidden; }
.st-1 { width: 288px; }
.st-2 { width: 84px; color: #222; letter-spacing: -.1px; }
.st-3 { width: 91px; color: #b3b1a4; }
.st-4 { width: 206px; margin-left: 4px; }
.st-5 { width: 156px; margin-left: -3px; color: #888; }
.st-6 { width: 24px; margin-left: 2px; border-left: 0; }

/* Tooltip and pointer */
.cursor { position: absolute; width: 14px; height: 20px; left: 39px; top: 109px; z-index: 3; }
.tip { position: absolute; left: 38px; top: 131px; z-index: 3; width: 43px; height: 18px; box-sizing: border-box; background: #ffffe1; border: 1px solid #111; font-size: 12px; line-height: 16px; text-align: center; color: #222; }
.win-b .cursor { left: 30px; top: 108px; }
.win-b .tip { left: 29px; top: 130px; }

/* Select a Component dialog */
.dlg { position: absolute; left: 124px; top: 118px; z-index: 2; display: flex; flex-direction: column; width: 530px; height: 423px; box-sizing: border-box; background: #0a39bd; border: solid #0b3ec4; border-width: 0 5px 5px 5px; border-right-color: #0a2ea6; border-bottom-color: #0a2ea6; border-radius: 7px 7px 0 0; overflow: hidden; }
.win-b .dlg { left: 122px; }
.dlg-title { display: flex; align-items: center; flex: none; height: 31px; margin: 0 -5px; padding: 0 6px 0 7px; background: linear-gradient(#0a5fe6, #0a5ae2 30%, #0c64ea 70%, #0450d4); }
.dlg-ic { width: 16px; height: 11px; margin-right: 5px; background: #f4f7ff; border-radius: 1px; }
.dlg-text { font-size: 14px; font-weight: bold; color: #f2f5ff; }
.dlg-caps { gap: 3px; }
.dlg-caps .cap { height: 23px; width: 23px; }
.dlg-body { display: grid; grid-template-columns: 137px 136px 139px 82px; column-gap: 7px; flex: 1; min-height: 0; padding: 4px 0 0 2px; background: #ece9d8; border-left: 1px solid #e8f0fc; border-right: 1px solid #bcd0f0; }
.col { display: flex; flex-direction: column; min-height: 0; }
.lb { display: block; flex: none; height: 14px; line-height: 14px; font-size: 12px; color: #333; white-space: nowrap; }
.lb-c { text-align: center; }
.lb-g { margin-top: 4px; }
.lb-f { margin-top: 2px; }
.lb-fn { margin-top: 21px; }
.lb-m { margin-top: 3px; }
.lb-fp { margin-top: 4px; }
.combo { display: flex; align-items: center; flex: none; box-sizing: border-box; width: 136px; background: #fff; border-top: 2px solid #999; border-left: 2px solid #999; font-size: 12px; padding-left: 2px; margin-top: 4px; color: #333; }
.c1 { height: 21px; }
.c2 { height: 23px; }
.combo-btn { display: flex; align-items: center; justify-content: center; align-self: stretch; width: 18px; margin-left: auto; background: #ece9d8; border-right: 1px solid #888; border-bottom: 1px solid #888; }
.grp-ic { display: flex; align-items: center; justify-content: center; width: 20px; height: 20px; margin-right: 6px; background: #c4c4c0; }
.grp-ic svg { width: 18px; height: 18px; }
.fam, .comp { list-style: none; padding: 0; margin: 0; }
.fam { flex: none; box-sizing: border-box; width: 136px; height: 276px; margin-top: 3px; padding-top: 1px; background: #fff; border-top: 2px solid #c4c2b4; border-left: 2px solid #b0ae9f; }
.fam li { display: flex; align-items: center; height: 23px; padding-left: 3px; }
.fi { display: flex; align-items: center; justify-content: center; flex: none; width: 20px; height: 20px; background: #c4c4c0; }
.fi svg { width: 19px; height: 19px; }
.fi-sel { background: #a8bcdc; }
.ft { display: block; flex: 1; padding-left: 2px; height: 23px; line-height: 23px; font-size: 12px; letter-spacing: -.12px; color: #333; white-space: nowrap; }
.fam .sel .ft { background: #316ac5; color: #e4ecfb; }
.inp { flex: none; box-sizing: border-box; height: 22px; margin-top: 4px; padding-left: 2px; background: #fff; border-top: 2px solid #888; border-left: 1px solid #bbb; line-height: 19px; font-size: 12px; color: #333; }
.comp { flex: none; box-sizing: border-box; height: 330px; margin-top: 1px; background: #fff; border-top: 1px solid #b5b3a4; border-left: 2px solid #8a8878; }
.comp li { height: 14.300px; line-height: 14.300px; padding-left: 2px; font-size: 12px; letter-spacing: -.1px; color: #333; white-space: nowrap; }
.comp li.sel { background: #316ac5; color: #dbe6fa; }
.sym { display: flex; align-items: center; justify-content: center; flex: none; height: 116px; margin-top: 3px; box-sizing: border-box; background: #fff; border: 1px solid #d8d6c8; border-right-color: #c8c6b8; border-bottom-color: #b5b3a4; }
.sym-dc { width: 40px; height: 60px; margin: 2px 0 0 -2px; }
.sym-ac { width: 40px; height: 60px; margin: -2px 0 0 -1px; }
.fn { flex: none; box-sizing: border-box; height: 58px; margin-top: 2px; padding: 1px 0 0 1px; border: 1px solid #c8c6b8; border-right-color: #f5f3e8; border-bottom-color: #f5f3e8; font-size: 12px; color: #333; }
.mdl { flex: none; box-sizing: border-box; height: 57px; margin-top: 3px; background: #fff; border-top: 1px solid #aaa; border-left: 1px solid #999; }
.mdl-sel { display: block; height: 16px; margin-right: 2px; padding-left: 3px; background: #316ac5; color: #dbe6fa; font-size: 12px; line-height: 17px; }
.fp { flex: none; box-sizing: border-box; height: 56px; margin-top: 4px; background: #fff; border-top: 1px solid #777; border-left: 1px solid #999; }
.btns { padding-top: 8px; }
.btn { display: block; flex: none; box-sizing: border-box; width: 82px; height: 23px; padding: 0; margin: 0 0 2px; background: #ece9d8; border: 1px solid; border-color: #f8f7ee #8f8d7e #8f8d7e #f8f7ee; border-bottom-width: 2px; font: 12px "Liberation Sans", sans-serif; color: #333; }
.btn-def { border: 2px solid #333; border-top-width: 1px; }
.btn-2 { margin-bottom: 15px; }
.btn-3 { margin-bottom: 3px; }
.btn-4 { margin-bottom: 1px; }
.btn-5 { margin-bottom: 15px; }

/* Document text */
.cap1, .cap2, .pageno { margin: 0; font-size: 26.700px; color: #111; filter: blur(.3px); }
.cap1 { margin-top: 53px; margin-bottom: 109px; height: 30px; line-height: 30px; white-space: nowrap; }
.cap2 { margin-top: 63px; line-height: 47.500px; text-align: center; }
.cap2-l2 { display: block; padding-left: 7px; }
.pageno { margin-top: 264px; line-height: 18px; text-align: center; }
```
